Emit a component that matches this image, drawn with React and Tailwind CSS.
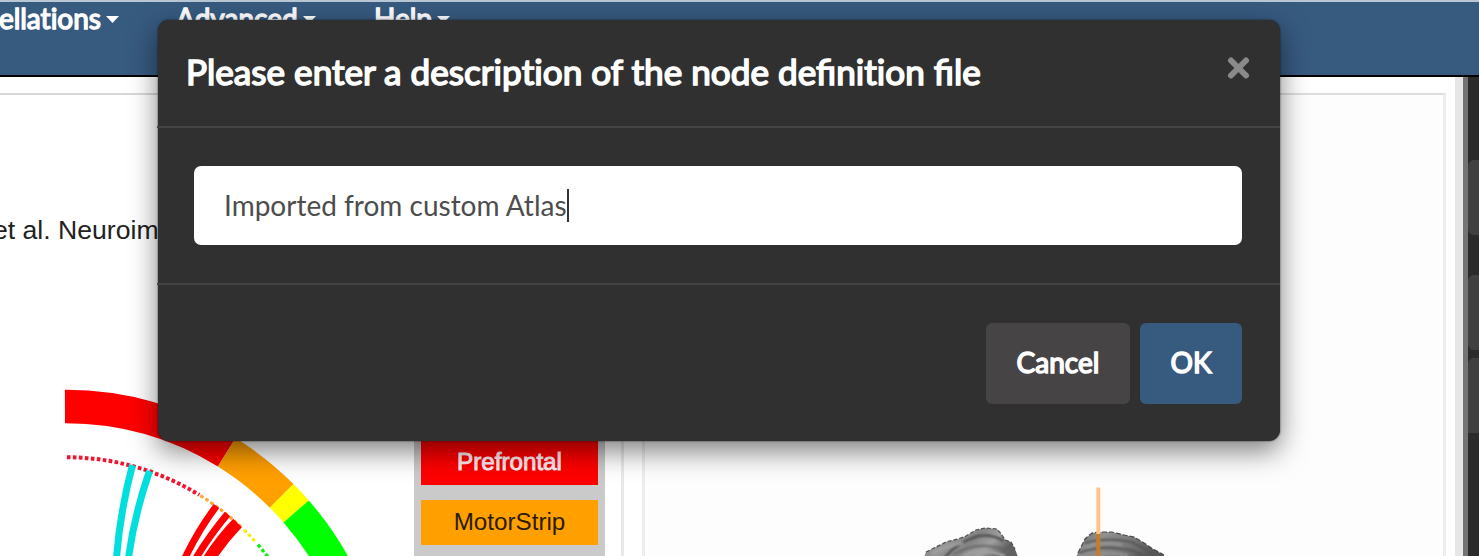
import React from "react";

const CX = 66;
const CY = 711.5;

function polar(r, deg) {
  const a = (deg * Math.PI) / 180;
  return [CX + r * Math.sin(a), CY - r * Math.cos(a)];
}

function arc(r, from, to) {
  const [x1, y1] = polar(r, from);
  const [x2, y2] = polar(r, to);
  return `M${x1} ${y1}A${r} ${r} 0 0 1 ${x2} ${y2}`;
}

const SECTORS = [
  { color: "#ff0000", from: -0.2, to: 31.8 },
  { color: "#ff9f00", from: 31.8, to: 45 },
  { color: "#ffff00", from: 45, to: 49 },
  { color: "#00ff00", from: 49, to: 80 },
];

const DOTS = [
  { color: "#f0142d", from: 0.2, to: 31.6, width: 4 },
  { color: "#ffa62b", from: 31.9, to: 44, width: 3 },
  { color: "#f3f000", from: 44.4, to: 48.3, width: 3 },
  { color: "#10ee10", from: 49, to: 70, width: 3.4 },
];

function Connectogram() {
  return (
    <svg className="block h-[479px] w-[414px] shrink-0" viewBox="0 77 414 479">
      {SECTORS.map((s) => (
        <path key={s.color} d={arc(305, s.from, s.to)} fill="none" stroke={s.color} strokeWidth="33.5" />
      ))}
      {DOTS.map((s) => (
        <path key={s.color} d={arc(254.3, s.from, s.to)} fill="none" stroke={s.color} strokeWidth={s.width} strokeDasharray="3.6 2.4" />
      ))}
      <g fill="none" stroke="#00dede">
        <path d="M132.5 465Q120 512 116.5 558" strokeWidth="7" />
        <path d="M149.5 471Q134 516 128.5 558" strokeWidth="7" />
      </g>
      <g fill="none" stroke="#ff0000">
        <path d="M216.5 506Q199 529 185 558" strokeWidth="7" />
        <path d="M227.5 514Q210 535 196 558" strokeWidth="7" />
        <path d="M237.5 523Q222 539 209 559" strokeWidth="12" />
      </g>
      <text x="-7" y="239" className="font-['Liberation_Sans',sans-serif] text-[26.6px]" fill="#222">
        et al. Neuroim
      </text>
    </svg>
  );
}

function Brains() {
  return (
    <svg className="block h-[76px] w-[300px]" viewBox="900 480 300 76">
      <defs>
        <linearGradient id="lobeA" x1="0" x2="1" y1="0" y2="0.3">
          <stop offset="0" stopColor="#6a6a6a" />
          <stop offset="0.35" stopColor="#969696" />
          <stop offset="0.6" stopColor="#858585" />
          <stop offset="0.8" stopColor="#a0a0a0" />
          <stop offset="1" stopColor="#606060" />
        </linearGradient>
        <linearGradient id="lobeB" x1="0" x2="1" y1="0" y2="0.3">
          <stop offset="0" stopColor="#666" />
          <stop offset="0.3" stopColor="#929292" />
          <stop offset="0.7" stopColor="#777" />
          <stop offset="1" stopColor="#585858" />
        </linearGradient>
        <filter id="soft" x="-10%" y="-30%" width="120%" height="160%">
          <feGaussianBlur stdDeviation="0.9" />
        </filter>
      </defs>
      <path d="M924 557L926 552L936 547L946 542L958 539L966 536L976 530L985 528L997 529L1002 535L1005 540L1011 542L1015 549L1018 557Z" fill="url(#lobeA)" />
      <path d="M926 552L936 547L946 542L958 539L966 536L976 530L985 528L997 529L1002 535L1005 540L1011 542L1015 549" fill="none" stroke="#505050" strokeWidth="1.2" strokeDasharray="4 2" />
      <g filter="url(#soft)" fill="none">
        <path d="M945 557Q958 542 978 536Q992 534 1004 541" stroke="#4e4e4e" strokeWidth="2.4" />
        <path d="M953 555Q980 538 1010 552" stroke="#666" strokeWidth="2" />
        <path d="M963 556Q982 547 1005 556" stroke="#a0a0a0" strokeWidth="3" />
        <path d="M932 553Q948 546 963 543" stroke="#a5a5a5" strokeWidth="2" />
      </g>
      <path d="M1076 557L1080 549L1085 539L1092 533L1098 532L1112 532L1124 535L1134 537L1144 543L1153 549L1164 555V557Z" fill="url(#lobeB)" />
      <path d="M1078 553L1085 539L1092 533L1098 532L1112 532L1124 535L1134 537L1144 543L1153 549L1164 555" fill="none" stroke="#484848" strokeWidth="1.2" strokeDasharray="5 2" />
      <g filter="url(#soft)" fill="none">
        <path d="M1085 543Q1106 537 1132 542L1158 556" stroke="#555" strokeWidth="2.2" />
        <path d="M1079 553Q1100 545 1122 549Q1134 549 1144 557" stroke="#555" strokeWidth="2.2" />
        <path d="M1092 557Q1107 550 1128 556" stroke="#909090" strokeWidth="3" />
        <path d="M1088 548Q1104 541 1122 545" stroke="#939393" strokeWidth="2.4" />
      </g>
      <path d="M1098.300 487.500V534" stroke="#ffc48c" strokeWidth="4" />
      <path d="M1098.300 534V556" stroke="#c87c28" strokeWidth="4" />
    </svg>
  );
}

function NavItem({ label, className }) {
  return (
    <span className={`flex shrink-0 items-center gap-[5px] whitespace-nowrap ${className}`}>
      {label}
      <svg className="mt-[3px] h-[7px] w-[13px]" viewBox="0 0 13 7">
        <path d="M0 0H13L6.500 7Z" fill="#fff" />
      </svg>
    </span>
  );
}

function Legend() {
  return (
    <div className="flex w-[191px] shrink-0 flex-col justify-end gap-[15px] bg-[#cacaca] pr-[7px] pb-[11px] pl-[7px] font-['Liberation_Sans',sans-serif] text-[24.200px]">
      <div className="flex h-[45px] items-center justify-center bg-[#ff0000] text-[#ffeef2] [-webkit-text-stroke:0.9px_#ffeef2]">Prefrontal</div>
      <div className="flex h-[45px] items-center justify-center bg-[#ff9f00] text-[#2b1c00]">MotorStrip</div>
    </div>
  );
}

function Dialog() {
  return (
    <div className="absolute top-[20px] left-[158px] flex h-[421px] w-[1122px] flex-col rounded-[11px] bg-[#303030] font-['Lato',sans-serif] shadow-[0_10px_28px_rgba(0,0,0,0.5),0_0_2px_rgba(0,0,0,0.7)]">
      <div className="ml-[-1px] flex h-[108px] shrink-0 items-center justify-between border-b-2 border-[#444] pr-[30px] pl-[29px]">
        <h2 className="mt-[-5px] text-[35.150px] leading-[44px] font-normal whitespace-nowrap text-white [-webkit-text-stroke:1.6px_white]">
          Please enter a descrip<span className="[font-variant-ligatures:none]">tion</span> of the node defini
          <span className="[font-variant-ligatures:none]">tion</span> file
        </h2>
        <svg className="mt-[-11px] h-[23px] w-[23px]" viewBox="0 0 23 23">
          <path d="M4 4.500L19 19.500M19 4.500L4 19.500" stroke="#8a8a8a" strokeWidth="6" strokeLinecap="round" />
        </svg>
      </div>
      <div className="ml-[-1px] h-[157px] shrink-0 border-b-2 border-[#444] pt-[38px] pr-[38px] pl-[37px]">
        <div className="flex h-[79px] items-center rounded-[7px] bg-white pl-[30px] text-[28px] text-[#4d4d4d]">
          <span className="mt-[-1px] whitespace-nowrap">Imported from custom Atlas</span>
          <span className="h-[33px] w-[2px] bg-[#333]" />
        </div>
      </div>
      <div className="flex justify-end gap-[10px] pt-[38px] pr-[38px] text-[28px] text-white [-webkit-text-stroke:1.5px_white]">
        <button className="h-[81px] w-[144px] rounded-[6px] bg-[#464445] pb-[4px]">Cancel</button>
        <button className="h-[81px] w-[102px] rounded-[6px] bg-[#375a7f] pb-[4px]">OK</button>
      </div>
    </div>
  );
}

export default function App() {
  return (
    <div className="relative flex h-[556px] w-[1479px] flex-col overflow-hidden bg-white">
      <nav className="flex h-[77px] shrink-0 items-start border-t-2 border-b-2 border-t-[#b9c6d3] border-b-black bg-[#375a7f] font-['Lato',sans-serif] text-[28px] leading-[32px] text-white [font-variant-ligatures:none] [-webkit-text-stroke:1.4px_white]">
        <div className="flex w-[176px] shrink-0 justify-end pr-[57px]">
          <NavItem label="ellations" className="" />
        </div>
        <NavItem label="Advanced" className="w-[198px]" />
        <NavItem label="Help" className="" />
      </nav>
      <div className="flex h-[479px] shrink-0">
        <div className="flex w-[624px] shrink-0 flex-col">
          <div className="mt-[-1px] h-[19px] shrink-0 border-b-2 border-[#d8d8d8]" />
          <div className="mt-[-18px] flex h-[479px] border-r-3 border-[#e9e9e9]">
            <Connectogram />
            <Legend />
          </div>
        </div>
        <div className="flex w-[831px] shrink-0 pt-[16px] pr-[9px] pl-[18px]">
          <div className="flex h-[463px] w-full items-end border-x-3 border-t-2 border-x-[#ededed] border-t-[#dedede] bg-[#fdfdfd] pl-[255px]">
            <Brains />
          </div>
        </div>
        <div className="w-[8px] shrink-0 bg-[#e6e6e6]" />
        <div className="w-[5px] shrink-0 bg-[#737575]" />
        <div className="flex w-[11px] shrink-0 flex-col bg-[#2b2b2b] pt-[83px]">
          <div className="h-[75px] rounded-l-[6px] bg-[#404040]" />
          <div className="mt-[40px] h-[75px] rounded-l-[6px] bg-[#404040]" />
          <div className="mt-[8px] h-[75px] rounded-tl-[6px] bg-[#404040]" />
        </div>
      </div>
      <Dialog />
    </div>
  );
}
